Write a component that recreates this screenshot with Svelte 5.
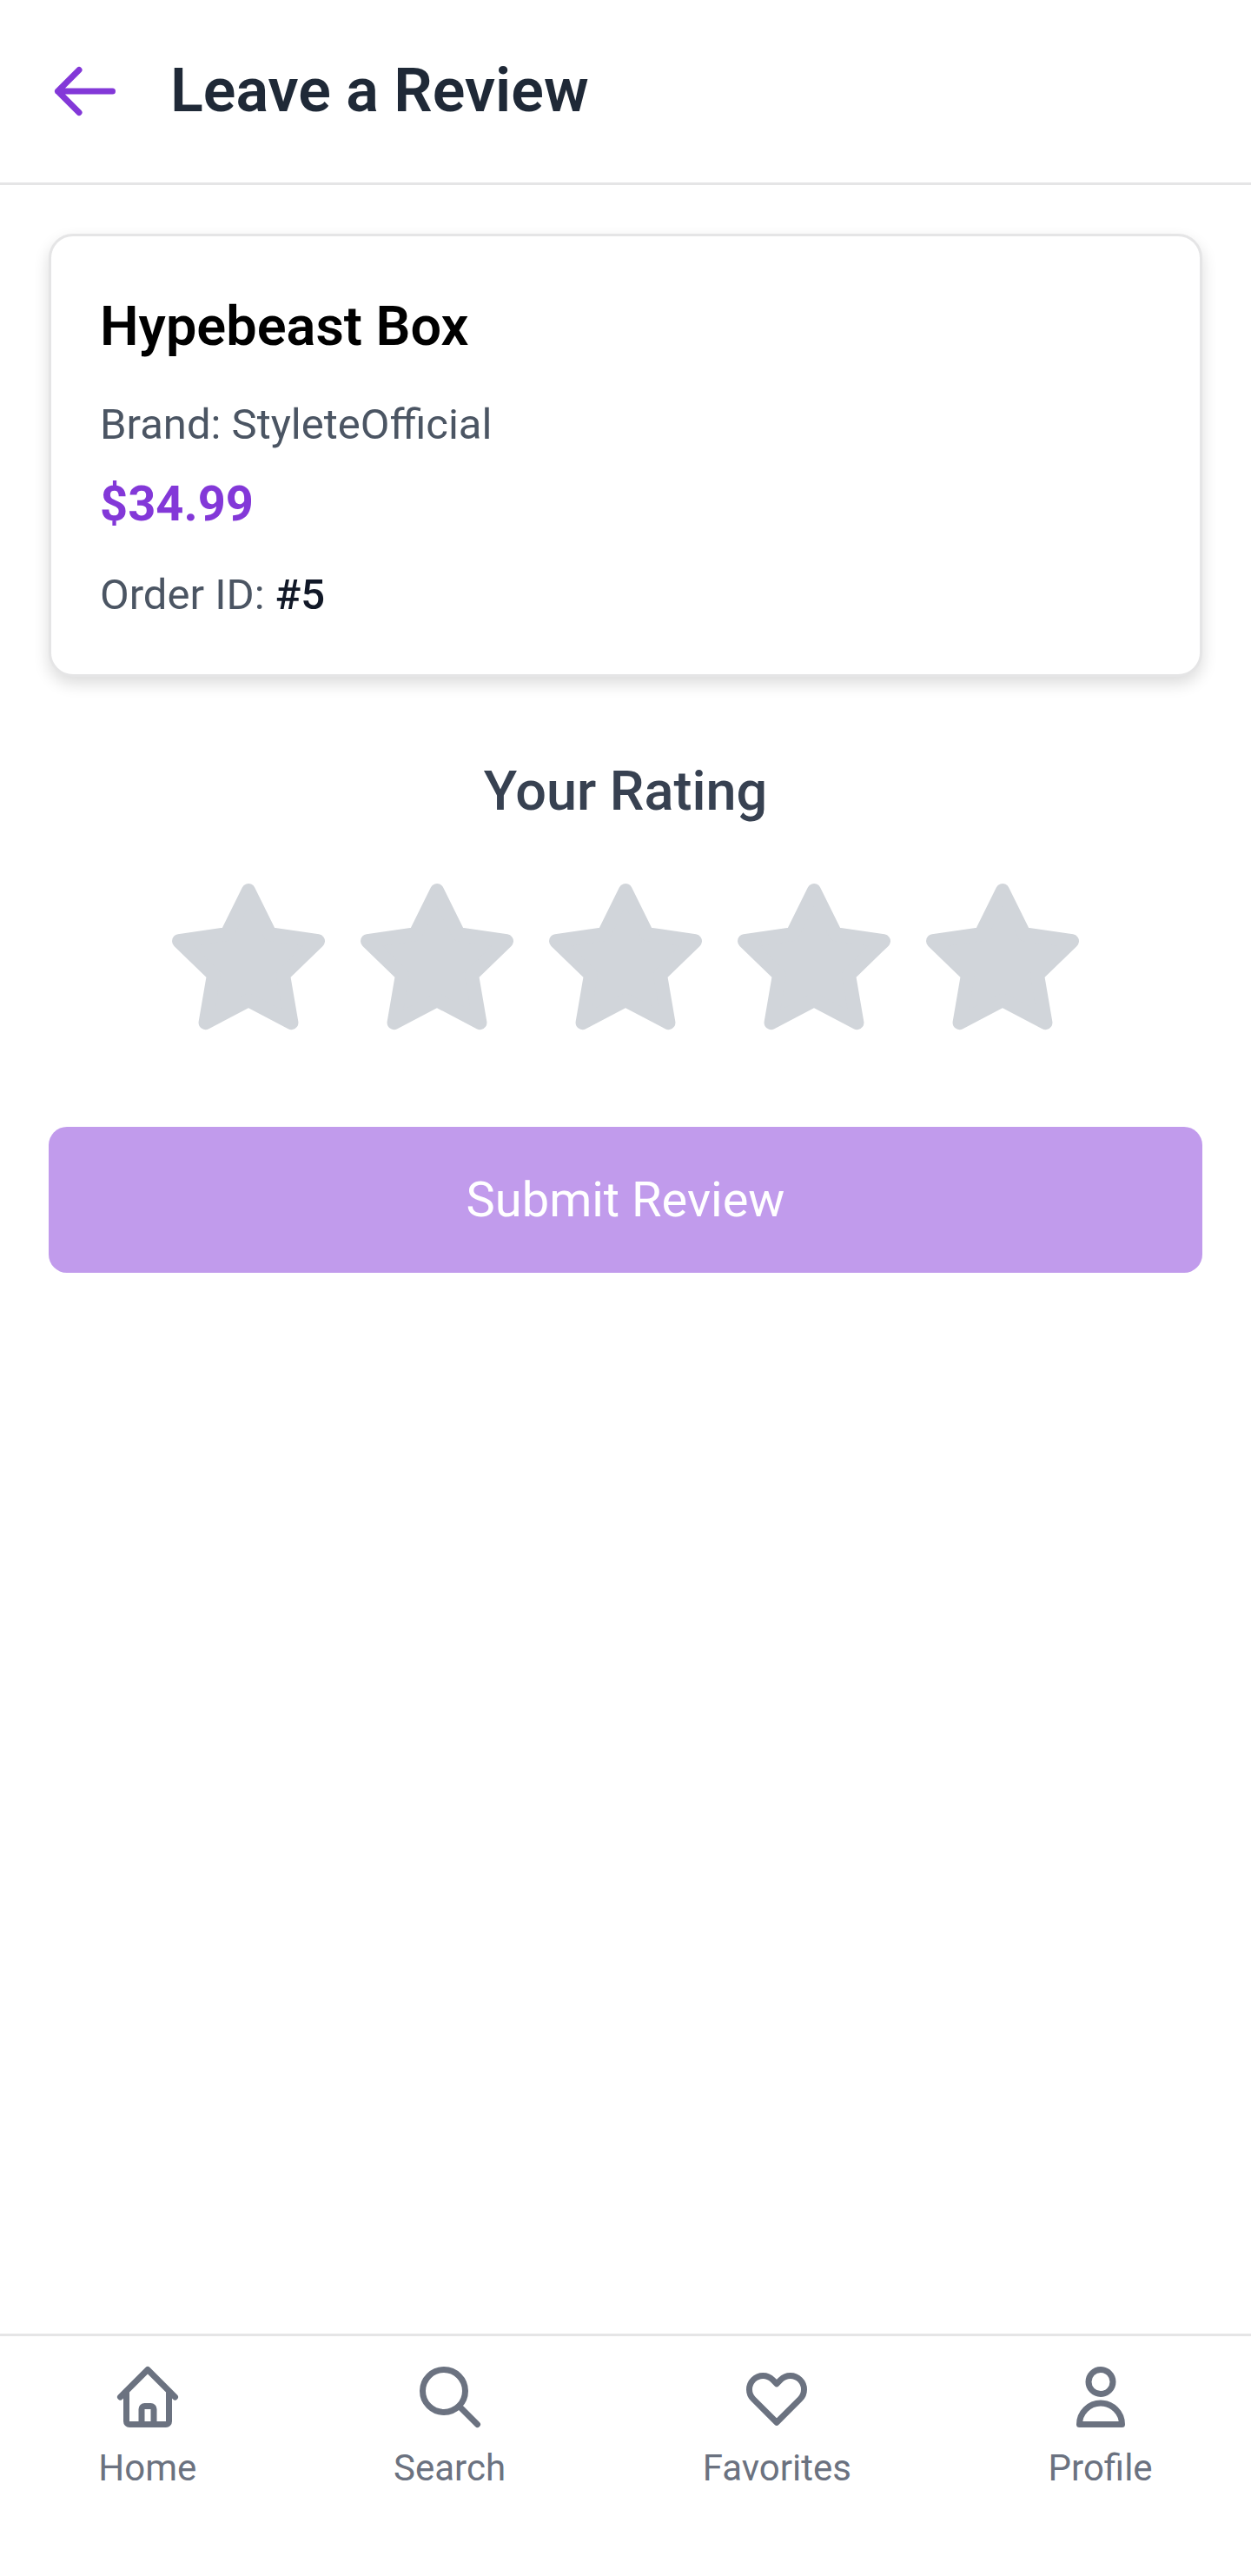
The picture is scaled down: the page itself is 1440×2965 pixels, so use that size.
<script>
  let rating = $state(0);
  let submitted = $state(false);

  const order = {
    id: 5,
    name: 'Hypebeast Box',
    brand: 'StyleteOfficial',
    price: 34.99
  };

  const stars = [1, 2, 3, 4, 5];

  const tabs = [
    {
      label: 'Home',
      href: '#home',
      path: 'M3 12l2-2m0 0l7-7 7 7M5 10v10a1 1 0 001 1h3m10-11l2 2m-2-2v10a1 1 0 01-1 1h-3m-6 0a1 1 0 001-1v-4a1 1 0 011-1h2a1 1 0 011 1v4a1 1 0 001 1m-6 0h6'
    },
    {
      label: 'Search',
      href: '#search',
      path: 'M21 21l-6-6m2-5a7 7 0 11-14 0 7 7 0 0114 0z'
    },
    {
      label: 'Favorites',
      href: '#favorites',
      path: 'M4.318 6.318a4.5 4.5 0 000 6.364L12 20.364l7.682-7.682a4.5 4.5 0 00-6.364-6.364L12 7.636l-1.318-1.318a4.5 4.5 0 00-6.364 0z'
    },
    {
      label: 'Profile',
      href: '#profile',
      path: 'M16 7a4 4 0 11-8 0 4 4 0 018 0zM12 14a7 7 0 00-7 7h14a7 7 0 00-7-7z'
    }
  ];

  function handleSubmit(e) {
    e.preventDefault();
    submitted = true;
  }
</script>

<div class="screen">
  <header class="header">
    <button class="back" aria-label="Go back" onclick={() => history.back()}>
      <svg class="icon" viewBox="0 0 24 24">
        <path d="M10 19l-7-7m0 0l7-7m-7 7h18" />
      </svg>
    </button>
    <h1>Leave a Review</h1>
  </header>

  <main class="content">
    <section class="card">
      <h2>{order.name}</h2>
      <p class="meta">Brand: {order.brand}</p>
      <p class="price">${order.price}</p>
      <p class="meta">Order ID: <span class="order-id">#{order.id}</span></p>
    </section>

    <form onsubmit={handleSubmit}>
      <h3 id="rating-label">Your Rating</h3>
      <div class="stars" role="group" aria-labelledby="rating-label">
        {#each stars as n}
          <button
            type="button"
            class="star"
            class:filled={n <= rating}
            aria-label={`Rate ${n} of 5`}
            onclick={() => (rating = n)}
          >
            <svg viewBox="0 0 24 24">
              <polygon points="12 2 15.09 8.26 22 9.27 17 14.14 18.18 21.02 12 17.77 5.82 21.02 7 14.14 2 9.27 8.91 8.26 12 2" />
            </svg>
          </button>
        {/each}
      </div>

      <button type="submit" class="submit" disabled={rating === 0 || submitted}>Submit Review</button>
    </form>
  </main>

  <nav class="tabs">
    {#each tabs as tab}
      <a href={tab.href}>
        <svg class="icon" viewBox="0 0 24 24">
          <path d={tab.path} />
        </svg>
        <span>{tab.label}</span>
      </a>
    {/each}
  </nav>
</div>

<style>
  :global(body) {
    margin: 0;
    background: #fff;
  }

  .screen {
    min-height: 100vh;
    display: flex;
    flex-direction: column;
    font-family: Roboto, sans-serif;
  }

  h1, h2, h3, p {
    margin: 0;
  }

  button {
    border: none;
    background: none;
    padding: 0;
    font-family: inherit;
    cursor: pointer;
  }

  .icon {
    display: block;
    width: 84px;
    height: 84px;
    fill: none;
    stroke: currentColor;
    stroke-width: 2;
    stroke-linecap: round;
    stroke-linejoin: round;
  }

  .header {
    display: flex;
    align-items: center;
    gap: 56px;
    padding: 56px;
    border-bottom: 3px solid #e5e5e6;
  }

  .back {
    color: #8338d8;
  }

  h1 {
    font-size: 70px;
    line-height: 96px;
    margin-bottom: 2px;
    font-weight: 600;
    color: #1f2937;
  }

  .content {
    flex: 1;
    padding: 56px;
  }

  .card {
    padding: 56px;
    border: 3px solid #e5e5e6;
    border-radius: 28px;
    background: #fff;
    box-shadow: 0 8px 18px rgba(0, 0, 0, 0.14);
  }

  h2 {
    margin-bottom: 30px;
    font-size: 63px;
    line-height: 96px;
    font-weight: 600;
    color: #000;
  }

  .meta {
    font-size: 49px;
    line-height: 70px;
    color: #4b5563;
  }

  .order-id {
    font-weight: 500;
    color: #111827;
  }

  .price {
    margin: 14px 0 28px;
    font-size: 56px;
    line-height: 84px;
    font-weight: 700;
    color: #8338d8;
  }

  h3 {
    margin: 84px 0 50px;
    font-size: 63px;
    line-height: 96px;
    font-weight: 500;
    text-align: center;
    color: #374151;
  }

  .stars {
    display: flex;
    justify-content: center;
    gap: 25px;
    margin-bottom: 96px;
  }

  .star {
    color: #d1d5da;
  }

  .star.filled {
    color: #facc15;
  }

  .star svg {
    display: block;
    width: 192px;
    height: 192px;
    fill: currentColor;
    stroke: currentColor;
    stroke-width: 2;
    stroke-linecap: round;
    stroke-linejoin: round;
  }

  .submit {
    display: block;
    width: 100%;
    padding: 42px;
    border-radius: 21px;
    background: #8338d8;
    color: #fff;
    font-size: 56px;
    line-height: 84px;
    font-weight: 400;
  }

  .submit:disabled {
    background: #c19bec;
    cursor: default;
  }

  .tabs {
    display: flex;
    justify-content: space-around;
    padding: 28px 0 96px;
    border-top: 3px solid #e5e5e6;
  }

  .tabs a {
    display: flex;
    flex-direction: column;
    align-items: center;
    gap: 12px;
    color: #6b7280;
    font-size: 42px;
    line-height: 56px;
    text-decoration: none;
  }
</style>
